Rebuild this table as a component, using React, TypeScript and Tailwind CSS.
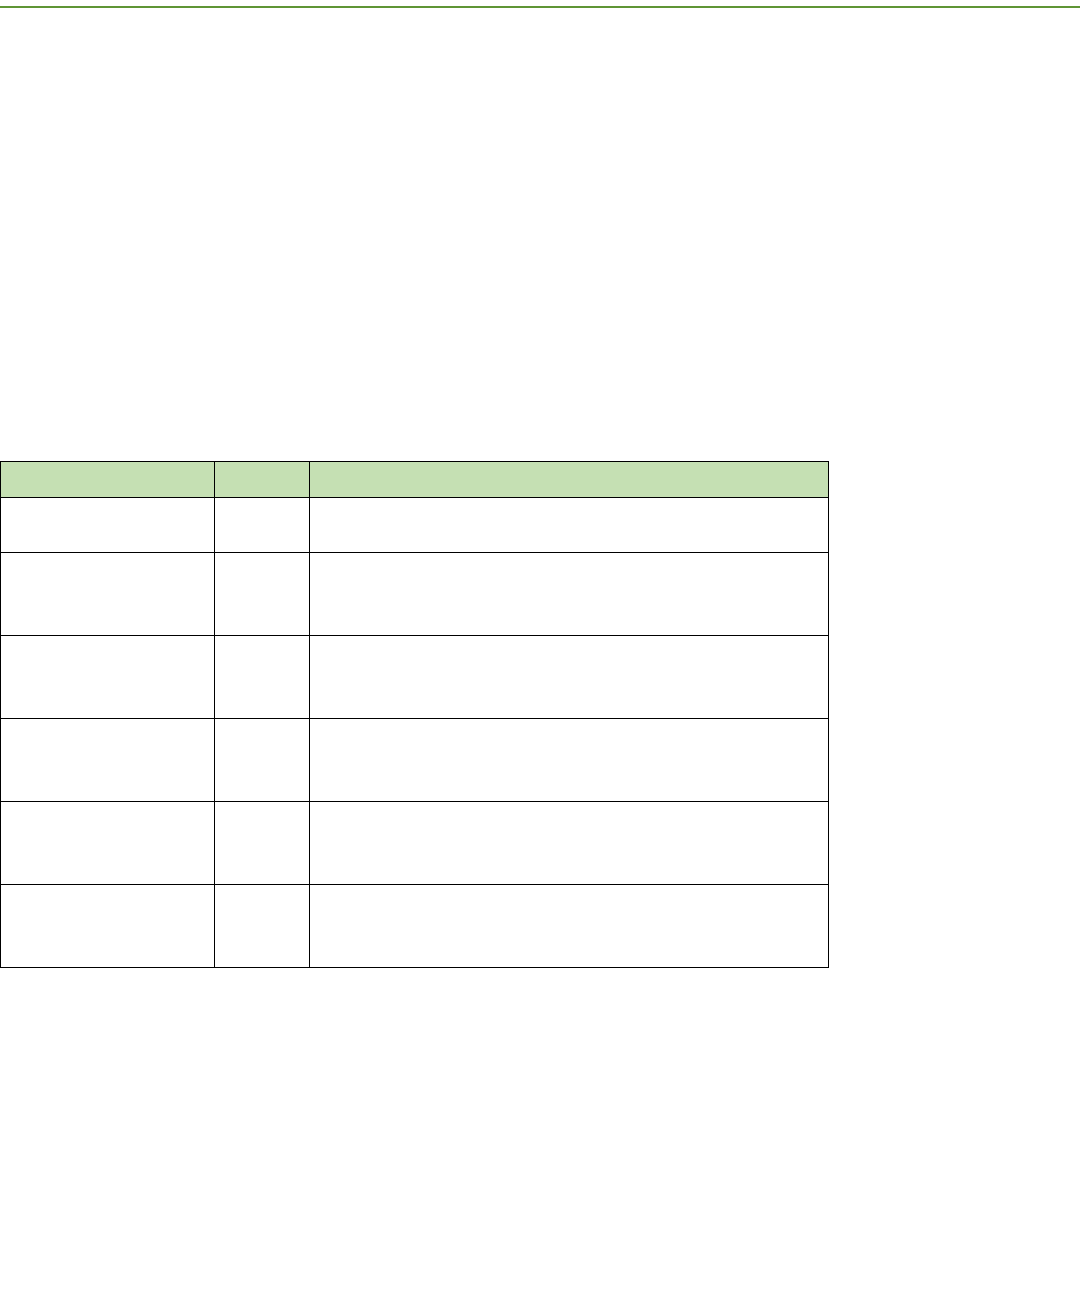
export default function App() {
  const rows = [55, 83, 83, 83, 83, 83];
  return (
    <div className="min-h-[1314px] bg-white pt-[6px] font-['Liberation_Sans',sans-serif]">
      <div className="h-[2px] bg-[#5f9535]" />
      <div className="mt-[453px] w-[829px] grid grid-cols-[214px_95px_519px] border-l border-t border-black">
        {/* header row */}
        <div className="h-[36px] bg-[#c5e0b3] border-r border-b border-black" />
        <div className="h-[36px] bg-[#c5e0b3] border-r border-b border-black" />
        <div className="h-[36px] bg-[#c5e0b3] border-r border-b border-black" />
        {rows.map((h, idx) => (
          <div key={idx} className="contents">
            <div className="border-r border-b border-black" style={{ height: h }} />
            <div className="border-r border-b border-black" style={{ height: h }} />
            <div className="border-r border-b border-black" style={{ height: h }} />
          </div>
        ))}
      </div>
    </div>
  );
}
